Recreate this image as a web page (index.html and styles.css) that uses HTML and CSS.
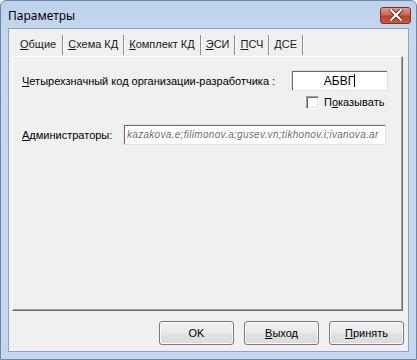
FILE: index.html
```html
<!DOCTYPE html>
<html lang="ru">
<head>
    <meta charset="UTF-8">
    <title>Параметры</title>
    <link rel="stylesheet" href="styles.css">
</head>
<body>
    <div class="window">
        <div class="titlebar">
            <span class="title">Параметры</span>
            <span class="close">
                <svg width="14" height="12" viewBox="0 0 14 12">
                    <path d="M2 1 L12 11 M12 1 L2 11" stroke="#6b2318" stroke-width="4" stroke-linecap="square"/>
                    <path d="M2 1 L12 11 M12 1 L2 11" stroke="#ffffff" stroke-width="2.2" stroke-linecap="square"/>
                </svg>
            </span>
        </div>
        <div class="client">
            <div class="tabs">
                <span class="tab first"><u>О</u>бщие</span>
                <span class="tab"><u>С</u>хема КД</span>
                <span class="tab"><u>К</u>омплект КД</span>
                <span class="tab"><u>Э</u>СИ</span>
                <span class="tab"><u>П</u>СЧ</span>
                <span class="tab"><u>Д</u>СЕ</span>
            </div>
            <div class="panel">
                <div class="code-row">
                    <span class="label"><u>Ч</u>етырехзначный код организации-разработчика :</span>
                    <div class="field code">АБВГ<span class="caret"></span></div>
                </div>
                <div class="check-row">
                    <span class="checkbox"></span>
                    <span>П<u>о</u>казывать</span>
                </div>
                <div class="admin-row">
                    <span class="label"><u>А</u>дминистраторы:</span>
                    <div class="field admins"><span class="noise">kazakova.e;filimonov.a;gusev.vn;tikhonov.i;ivanova.ar</span></div>
                </div>
            </div>
            <div class="buttons">
                <button class="btn">OK</button>
                <button class="btn"><u>В</u>ыход</button>
                <button class="btn"><u>П</u>ринять</button>
            </div>
        </div>
    </div>
</body>
</html>
```

FILE: styles.css
```css
html, body {
    margin: 0;
    padding: 0;
    background: #ffffff;
}
.window {
    width: 417px;
    height: 360px;
    box-sizing: border-box;
    border: 1px solid #6d87a6;
    border-radius: 6px 6px 0 0;
    background: linear-gradient(#bcd3ec, #c6d9ee 40px, #c3d7ed);
    font-family: "Liberation Sans", Arial, sans-serif;
    font-size: 11px;
    color: #000000;
    display: flex;
    flex-direction: column;
}
.titlebar {
    height: 27px;
    display: flex;
    align-items: center;
    padding: 0 5px 0 7px;
}
.title {
    font-family: "Noto Sans", "Open Sans", sans-serif;
    font-size: 12px;
    color: #000000;
    flex: 1;
    margin-top: 2px;
}
.close {
    width: 31px;
    height: 17px;
    margin-top: 1px;
    box-sizing: border-box;
    border: 1px solid #7a3326;
    border-radius: 3px;
    background: linear-gradient(#e59a86, #d0634c 45%, #c1402a 55%, #c75a3c);
    display: flex;
    align-items: center;
    justify-content: center;
}
.client {
    flex: 1;
    margin: 0 7px 7px 7px;
    border: 1px solid #8ea4bd;
    background: #f0f0f0;
    display: flex;
    flex-direction: column;
    padding: 6px 4px 0 3px;
}
.tabs {
    display: flex;
    height: 21px;
    align-items: stretch;
}
.tab {
    padding: 0 5px 0 4px;
    line-height: 19px;
    border-right: 1px solid #8d8d8d;
    box-shadow: 1px 0 0 #ffffff;
    margin: 0 1px 1px 0;
    color: #1a1a1a;
}
.tab.first {
    padding-left: 8px;
    padding-right: 6px;
}
.panel {
    height: 255px;
    box-sizing: border-box;
    border-top: 1px solid #ffffff;
    border-left: 1px solid #ffffff;
    border-right: 1px solid #696969;
    border-bottom: 1px solid #696969;
    box-shadow: inset -1px -1px 0 #a0a0a0;
    padding: 13px 14px 0 9px;
    margin-right: 1px;
}
.code-row {
    display: flex;
    align-items: center;
}
.label {
    flex: 1;
    white-space: nowrap;
}
.field {
    background: #ffffff;
    box-sizing: border-box;
    border-top: 1px solid #a0a0a0;
    border-left: 1px solid #a0a0a0;
    border-right: 1px solid #ffffff;
    border-bottom: 1px solid #ffffff;
    box-shadow: inset 1px 1px 0 #696969;
    outline: 1px solid #e3e3e3;
    outline-offset: -1px;
}
.field.code {
    width: 97px;
    height: 21px;
    display: flex;
    align-items: center;
    justify-content: center;
    font-size: 12px;
}
.caret {
    width: 1px;
    height: 13px;
    background: #000000;
}
.check-row {
    display: flex;
    align-items: center;
    gap: 5px;
    margin: 4px 0 0 284px;
    height: 14px;
}
.checkbox {
    width: 13px;
    height: 13px;
    box-sizing: border-box;
    background: #ffffff;
    border-top: 1px solid #a0a0a0;
    border-left: 1px solid #a0a0a0;
    border-right: 1px solid #ffffff;
    border-bottom: 1px solid #ffffff;
    box-shadow: inset 1px 1px 0 #696969, inset -1px -1px 0 #e3e3e3;
}
.admin-row {
    display: flex;
    align-items: center;
    margin-top: 15px;
    padding-right: 2px;
}
.admin-row .label {
    flex: none;
    width: 101px;
}
.field.admins {
    flex: 1;
    height: 21px;
    overflow: hidden;
    display: flex;
    align-items: center;
    padding-left: 3px;
}
.noise {
    white-space: nowrap;
    font-size: 10px;
    letter-spacing: 0.3px;
    color: #3a3a3a;
    font-style: italic;
    opacity: 0.75;
}
.buttons {
    display: flex;
    justify-content: flex-end;
    gap: 10px;
    margin-top: 10px;
}
.btn {
    width: 75px;
    height: 24px;
    font-family: "Liberation Sans", Arial, sans-serif;
    font-size: 11px;
    color: #000000;
    background: linear-gradient(#f2f2f2, #e9e9e9 50%, #e2e2e2 51%, #dbdbdb);
    border: 1px solid #7a7a7a;
    border-radius: 3px;
    box-shadow: inset 0 0 0 1px #fafafa;
    padding: 0;
}
```
